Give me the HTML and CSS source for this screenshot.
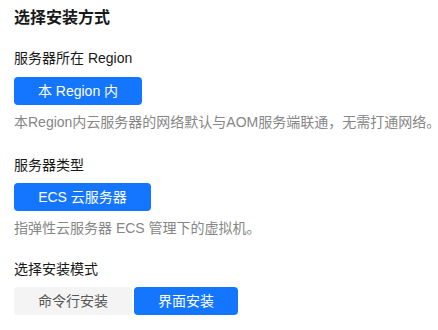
FILE: index.html
```html
<!DOCTYPE html>
<html lang="zh-CN">
<head>
<meta charset="utf-8">
<link rel="stylesheet" href="styles.css">
</head>
<body>
<div class="panel">
  <h2 class="title">选择安装方式</h2>
  <section class="field">
    <div class="label">服务器所在 Region</div>
    <button class="btn btn-primary btn-region">本 Region 内</button>
    <p class="desc">本Region内云服务器的网络默认与AOM服务端联通，无需打通网络。</p>
  </section>
  <section class="field">
    <div class="label">服务器类型</div>
    <button class="btn btn-primary btn-ecs">ECS 云服务器</button>
    <p class="desc">指弹性云服务器 ECS 管理下的虚拟机。</p>
  </section>
  <section class="field">
    <div class="label">选择安装模式</div>
    <div class="segmented">
      <button class="btn btn-plain seg-cli">命令行安装</button>
      <button class="btn btn-primary seg-ui">界面安装</button>
    </div>
  </section>
</div>
</body>
</html>
```
FILE: styles.css
```css
* { box-sizing: border-box; }
html, body { margin: 0; padding: 0; background: #fff; }
body {
  font-family: "Liberation Sans", Arial, "Noto Sans CJK SC", sans-serif;
  color: #191919;
}
.panel {
  padding: 6px 0 0 14px;
  display: flex;
  flex-direction: column;
}
.title {
  margin: 0;
  font-size: 16px;
  line-height: 24px;
  font-weight: 700;
  color: #191919;
}
.field {
  display: flex;
  flex-direction: column;
  align-items: flex-start;
}
.field:nth-of-type(1) { margin-top: 18px; }
.field:nth-of-type(2) { margin-top: 23px; }
.field:nth-of-type(3) { margin-top: 21px; }
.label {
  font-size: 14px;
  line-height: 20px;
  color: #191919;
}
.btn {
  font-family: inherit;
  font-size: 14px;
  height: 28px;
  line-height: 28px;
  padding: 0;
  border: none;
  border-radius: 4px;
  margin-top: 9px;
  cursor: pointer;
}
.btn-primary { background: #1476ff; color: #fff; }
.btn-plain { background: #f4f4f4; color: #575757; }
.btn-region { width: 128px; }
.btn-ecs { width: 137px; margin-top: 8px; }
.desc {
  margin: 7px 0 0 0;
  font-size: 14px;
  line-height: 20px;
  color: #868686;
  white-space: nowrap;
}
.segmented {
  display: flex;
  gap: 2px;
  margin-top: 8px;
}
.segmented .btn { margin-top: 0; }
.seg-cli { width: 118px; }
.seg-ui { width: 104px; }
```
